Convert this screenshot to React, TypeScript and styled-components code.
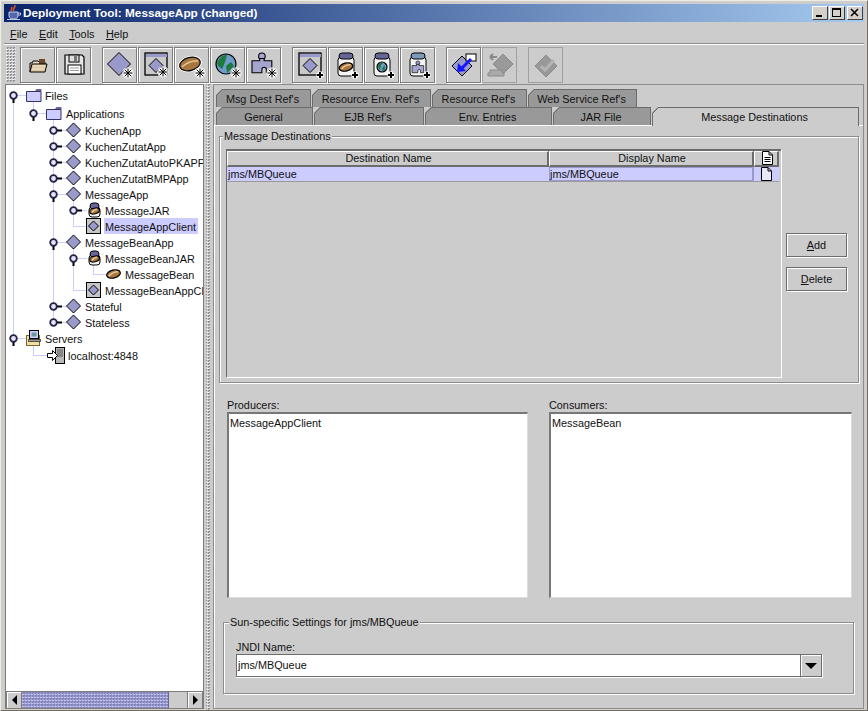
import React from 'react';
import styled, { createGlobalStyle } from 'styled-components';

const GlobalStyle = createGlobalStyle`
  * { box-sizing: border-box; }
  html, body { margin: 0; padding: 0; background: #cccccc; }
  body { font-family: "Liberation Sans", Arial, sans-serif; font-size: 10.85px; color: #111; }
`;

const dots = (a: string, b: string, c: string) =>
  `conic-gradient(${a} 25%, ${b} 0 50%, ${c} 0 75%, ${b} 0) 0 0 / 3px 3px`;

const S = {
  Window: styled.div`
    width: 868px;
    height: 711px;
    display: flex;
    flex-direction: column;
    overflow: hidden;
    background: #cccccc;
    border-style: solid;
    border-color: #eeece6 #6e6c64 #6e6c64 #eeece6;
    border-width: 1px;
    padding: 3px 3px 0 3px;
    box-shadow: inset -1px -1px #d4d0c8, inset 1px 1px #d4d0c8;
  `,
  TitleBar: styled.div`
    flex: none;
    height: 18px;
    display: flex;
    align-items: center;
    padding: 0 1px 0 2px;
    background: linear-gradient(90deg, #0a246a, #a6caf0);
    color: #fff;
    font: bold 11.8px "Liberation Sans", Arial, sans-serif;
  `,
  TitleText: styled.span`
    margin-left: 1px;
    flex: 1;
  `,
  WinButton: styled.div`
    width: 16px;
    height: 14px;
    margin-left: ${(p: { $gap?: number }) => p.$gap ?? 0}px;
    background: #d4d0c8;
    border: 1px solid;
    border-color: #fff #404040 #404040 #fff;
    display: flex;
    align-items: center;
    justify-content: center;
  `,
  MenuBar: styled.div`
    flex: none;
    height: 22px;
    display: flex;
    align-items: center;
    gap: 11.5px;
    padding: 2px 0 0 6px;
    border-bottom: 1px solid #8c8c8c;
  `,
  Mnemonic: styled.span`
    text-decoration: underline;
  `,
  Toolbar: styled.div`
    flex: none;
    height: 40px;
    display: flex;
    align-items: flex-start;
    padding: 2px 0 0 2px;
    border-top: 1px solid #fff;
  `,
  Grip: styled.div`
    width: 10px;
    height: 35px;
    margin-right: 4px;
    background: ${dots('#8f8f8f', '#cccccc', '#f0f0f0')};
  `,
  ToolButton: styled.div<{ $off?: boolean; $gap?: number }>`
    width: 35px;
    height: 36px;
    margin-left: ${p => p.$gap ?? 1}px;
    display: flex;
    align-items: center;
    justify-content: center;
    border: 1px solid ${p => (p.$off ? '#a0a0a0' : '#7c7c7c')};
    box-shadow: ${p => (p.$off ? 'none' : '1px 1px #fff, inset 1px 1px #fff')};
  `,
  Main: styled.div`
    flex: 1;
    min-height: 0;
    display: flex;
  `,
  TreePane: styled.div`
    width: 199px;
    margin: 0 0 1px 1px;
    display: flex;
    flex-direction: column;
    background: #fff;
    border: 1px solid #7c7c7c;
  `,
  Tree: styled.div`
    flex: 1;
    min-height: 0;
    overflow: hidden;
    padding-top: 1px;
  `,
  TreeRow: styled.div<{ $h: number }>`
    height: ${p => p.$h}px;
    display: flex;
    align-items: center;
    white-space: nowrap;
  `,
  Gutter: styled.svg`
    flex: none;
    display: block;
  `,
  TreeLabel: styled.span<{ $selected?: boolean }>`
    height: 16px;
    line-height: 18px;
    padding: 0 2px 0 1px;
    background: ${p => (p.$selected ? '#ccccff' : 'transparent')};
  `,
  HScroll: styled.div`
    flex: none;
    height: 17px;
    display: flex;
    background: #cccccc;
    border-top: 1px solid #7c7c7c;
  `,
  ScrollButton: styled.div`
    width: 16px;
    display: flex;
    align-items: center;
    justify-content: center;
    background: #cccccc;
    box-shadow: inset 1px 1px #fff;
    border: 0 solid #7c7c7c;
    border-width: 0 1px;
  `,
  ScrollThumb: styled.div`
    width: 147px;
    background: ${dots('#8080bb', '#9999cc', '#c4c4ee')};
    border-right: 1px solid #666699;
  `,
  ScrollTrack: styled.div`
    flex: 1;
  `,
  Divider: styled.div`
    width: 9px;
    background: ${dots('#8f8f8f', '#cccccc', '#f0f0f0')};
    background-clip: content-box;
    padding: 0 3px 0 2px;
  `,
  RightPane: styled.div`
    flex: 1;
    margin-bottom: 1px;
    display: flex;
    flex-direction: column;
    border: 1px solid #8c8c8c;
  `,
  TabRow: styled.div<{ $top?: number }>`
    flex: none;
    height: 18px;
    margin-top: ${p => p.$top ?? 0}px;
    display: flex;
    gap: 1px;
    padding-left: 2px;
    position: relative;
    z-index: 1;
  `,
  Tab: styled.div<{ $w: number; $active?: boolean }>`
    width: ${p => p.$w}px;
    height: ${p => (p.$active ? 19 : 18)}px;
    display: flex;
    align-items: center;
    justify-content: center;
    padding: ${p => (p.$active ? '0 2px 1px 0' : '1px 2px 0 0')};
    border: 1px solid #6c6c6c;
    border-bottom: 0;
    clip-path: polygon(6px 0, 100% 0, 100% 100%, 0 100%, 0 6px);
    background: linear-gradient(
      135deg,
      transparent 4px,
      #6c6c6c 4px,
      #6c6c6c 5.2px,
      ${p => (p.$active ? '#cccccc' : '#999999')} 5.2px
    ) border-box;
  `,
  TabBody: styled.div`
    flex: 1;
    min-height: 0;
    display: flex;
    flex-direction: column;
    border-top: 1px solid #fff;
    border-left: 1px solid #fff;
    padding-left: 4px;
  `,
  Group: styled.div<{ $w: number; $h: number; $top: number; $left?: number }>`
    flex: none;
    position: relative;
    width: ${p => p.$w}px;
    height: ${p => p.$h}px;
    margin-top: ${p => p.$top}px;
    margin-left: ${p => p.$left ?? 0}px;
    border: 1px solid #8c8c8c;
    box-shadow: inset 1px 1px #fff, 1px 1px #fff;
  `,
  GroupTitle: styled.span<{ $left: number }>`
    position: absolute;
    top: -7px;
    left: ${p => p.$left}px;
    padding: 0 1px;
    line-height: 13px;
    background: #cccccc;
  `,
  DestBody: styled.div`
    height: 100%;
    display: flex;
    padding: 12px 0 0 6px;
  `,
  TableScroll: styled.div`
    width: 555px;
    height: 228px;
    border: 1px solid #6c6c6c;
    border-width: 2px 0 0 1px;
    box-shadow: 1px 1px #fff;
    margin-right: 5px;
  `,
  TableRow: styled.div<{ $h: number }>`
    display: flex;
    height: ${p => p.$h}px;
  `,
  HeaderCell: styled.div<{ $w: number }>`
    width: ${p => p.$w}px;
    display: flex;
    align-items: center;
    justify-content: center;
    padding: 0 0 1px 2px;
    border: 1px solid;
    border-color: #fff #6c6c6c #6c6c6c #fff;
    border-width: 1px 2px 2px 1px;
  `,
  BodyCell: styled.div<{ $w: number; $focus?: boolean }>`
    width: ${p => p.$w}px;
    display: flex;
    align-items: center;
    padding-left: 1px;
    background: #ccccff;
    border-bottom: 1px solid #9a9a9a;
    box-shadow: ${p => (p.$focus ? 'inset 1px 1px #9999cc, inset -2px -1px #9999cc' : 'none')};
  `,
  IconCell: styled.div`
    width: 25px;
    display: flex;
    align-items: center;
    justify-content: center;
    background: #ccccff;
    border-bottom: 1px solid #9a9a9a;
  `,
  SideButtons: styled.div`
    display: flex;
    flex-direction: column;
    gap: 10px;
    padding-top: 84px;
  `,
  PushButton: styled.div`
    width: 61px;
    height: 24px;
    display: flex;
    align-items: center;
    justify-content: center;
    border: 1px solid #6c6c6c;
    box-shadow: 1px 1px #fff, inset 1px 1px #fff;
  `,
  ListsRow: styled.div`
    flex: none;
    display: flex;
    gap: 21px;
    margin-top: 16px;
    padding-left: 8px;
  `,
  ListColumn: styled.div<{ $w: number }>`
    width: ${p => p.$w}px;
  `,
  FieldLabel: styled.div`
    height: 13px;
    line-height: 13px;
  `,
  ListBox: styled.div`
    height: 186px;
    padding: 3px 1px;
    line-height: 13px;
    background: #fff;
    border: 1px solid #6c6c6c;
    border-width: 2px 1px 1px 2px;
    border-color: #777 #ddd #ddd #777;
  `,
  SunBody: styled.div`
    padding: 18px 0 0 12px;
  `,
  Combo: styled.div`
    display: flex;
    width: 586px;
    height: 23px;
  `,
  ComboInput: styled.div`
    flex: 1;
    padding: 0 1px;
    line-height: 21px;
    background: #fff;
    border: 1px solid #6c6c6c;
    border-right: 0;
    box-shadow: 0 1px #fff;
  `,
  ComboArrow: styled.div`
    width: 22px;
    display: flex;
    align-items: center;
    justify-content: center;
    border: 1px solid #6c6c6c;
    box-shadow: 1px 1px #fff, inset 1px 1px #fff;
  `,
};

// --- drawings ---------------------------------------------------------

const Diamond = ({ cx, cy, r, fill = '#9999cc', stroke = '#000' }: { cx: number; cy: number; r: number; fill?: string; stroke?: string }) => (
  <polygon points={`${cx},${cy - r} ${cx + r},${cy} ${cx},${cy + r} ${cx - r},${cy}`} fill={fill} stroke={stroke} strokeWidth="1" />
);

const Star = ({ x = 22, y = 22 }: { x?: number; y?: number }) => (
  <g strokeLinecap="square">
    <path d={`M${x - 4} ${y}H${x + 4}M${x} ${y - 4}V${y + 4}M${x - 3} ${y - 3}L${x + 3} ${y + 3}M${x + 3} ${y - 3}L${x - 3} ${y + 3}`} stroke="#fff" strokeWidth="3" />
    <path d={`M${x - 4} ${y}H${x + 4}M${x} ${y - 4}V${y + 4}M${x - 3} ${y - 3}L${x + 3} ${y + 3}M${x + 3} ${y - 3}L${x - 3} ${y + 3}`} stroke="#000" strokeWidth="1" />
  </g>
);

const Plus = ({ x = 23, y = 23 }: { x?: number; y?: number }) => (
  <g>
    <path d={`M${x - 3.5} ${y}H${x + 3.5}M${x} ${y - 3.5}V${y + 3.5}`} stroke="#fff" strokeWidth="4" />
    <path d={`M${x - 3} ${y}H${x + 3}M${x} ${y - 3}V${y + 3}`} stroke="#000" strokeWidth="2" />
  </g>
);

const Bean = ({ cx, cy, rx, ry, halo }: { cx: number; cy: number; rx: number; ry: number; halo?: boolean }) => (
  <g transform={`rotate(-14 ${cx} ${cy})`}>
    {halo && <ellipse cx={cx} cy={cy} rx={rx + 1.5} ry={ry + 1.5} fill="#fff" />}
    <ellipse cx={cx} cy={cy} rx={rx} ry={ry} fill="#a8763e" stroke="#000" strokeWidth="1.2" />
    <path d={`M${cx - rx + 2} ${cy + 1}Q${cx} ${cy - ry * 0.6} ${cx + rx - 2} ${cy - 1}`} fill="none" stroke="#e2c79a" strokeWidth="1.5" />
  </g>
);

const Globe = ({ cx, cy, r }: { cx: number; cy: number; r: number }) => (
  <g>
    <circle cx={cx} cy={cy} r={r} fill="#6f9cca" stroke="#000" strokeWidth="1.2" />
    <path d={`M${cx - r + 1} ${cy - 1}Q${cx - r / 2} ${cy - r} ${cx + 1} ${cy - r + 1}L${cx - 1} ${cy - 2}L${cx - 3 * r / 8} ${cy + r / 2}L${cx - r + 2} ${cy + 2}Z`} fill="#1d7a3c" />
    <path d={`M${cx + 1} ${cy + r - 1}L${cx + r - 2} ${cy + 2}L${cx + r / 2} ${cy - 2}L${cx} ${cy + 2}Z`} fill="#1d7a3c" />
  </g>
);

const Puzzle = ({ x, y, s = 1 }: { x: number; y: number; s?: number }) => (
  <g transform={`translate(${x} ${y}) scale(${s})`}>
    <circle cx="9" cy="3" r="3" fill="#a5a5cf" stroke="#000" />
    <path d="M7 5h4v2h7v11h-5v-3a2 2 0 0 0-4 0v3h-9v-11h7z" fill="#a5a5cf" stroke="#000" />
  </g>
);

const WindowBox = ({ x, y, size, r }: { x: number; y: number; size: number; r: number }) => (
  <g>
    <rect x={x} y={y} width={size} height={size} fill="#c9c9c9" stroke="#000" strokeWidth="1.3" />
    <rect x={x + 1} y={y + 1} width={size - 1} height="3" fill="#9999cc" />
    <Diamond cx={x + size / 2} cy={y + size / 2 + 1.5} r={r} />
  </g>
);

const Jar = ({ x, y, w, h, lid = '#666699' }: { x: number; y: number; w: number; h: number; lid?: string }) => (
  <g>
    <rect x={x} y={y + 4} width={w} height={h - 4} rx="3" fill="#f4f4f4" stroke="#000" />
    <rect x={x + 1} y={y} width={w - 2} height="6" rx="3" fill={lid} stroke="#000" />
  </g>
);

const ToolIcon = ({ children }: { children: React.ReactNode }) => (
  <svg width="28" height="28" viewBox="0 0 28 28">{children}</svg>
);

const toolIcons: Record<string, React.ReactNode> = {
  open: (
    <g>
      <path d="M6 21V12h2l1-2h5l1 1h6v3" fill="#e8dcc4" stroke="#000" />
      <path d="M15 8h6v5h-6z" fill="#6b4a32" />
      <path d="M6 21l2-8h15l-2 8z" fill="#e0c8a4" stroke="#000" />
      <path d="M9 15h12M8 18h12" stroke="#f0e4d0" />
    </g>
  ),
  save: (
    <g>
      <path d="M5 4h17l2 2v17h-19z" fill="#e6e6e6" stroke="#000" strokeWidth="1.2" />
      <rect x="9" y="4" width="10" height="7" fill="#ddd" stroke="#000" />
      <rect x="14" y="5" width="3" height="5" fill="#777" />
      <rect x="8" y="14" width="13" height="9" fill="#fff" stroke="#000" />
      <path d="M10 17h9M10 19.500h9" stroke="#999" />
    </g>
  ),
  app: (<g><Diamond cx={13} cy={13} r={11.5} /><Star /></g>),
  client: (<g><WindowBox x={3} y={2} size={22} r={7} /><Star x={21} y={21} /></g>),
  bean: (<g><Bean cx={12} cy={13} rx={10.5} ry={6.5} halo /><Star /></g>),
  globe: (<g><Globe cx={12} cy={13} r={10} /><Star /></g>),
  puzzle: (<g><Puzzle x={2} y={2} s={1.1} /><Star x={22} y={22} /></g>),
  addClient: (<g><WindowBox x={3} y={2} size={22} r={7} /><Plus x={24} y={24} /></g>),
  addBean: (<g><Jar x={6} y={2} w={16} h={23} /><Bean cx={14} cy={16} rx={7} ry={4} /><Plus x={23} y={24} /></g>),
  addGlobe: (<g><Jar x={6} y={2} w={16} h={23} /><Globe cx={14} cy={16} r={5} /><Plus x={23} y={24} /></g>),
  addPuzzle: (<g><Jar x={6} y={2} w={16} h={23} lid="#7d9ab8" /><Puzzle x={8} y={10} s={0.65} /><Plus x={23} y={24} /></g>),
  deploy: (
    <g>
      <Diamond cx={12} cy={15} r={10} />
      <rect x="16" y="3" width="10" height="7" fill="#fff" stroke="#000" />
      <path d="M21 8L11 18" stroke="#1414ff" strokeWidth="3" />
      <path d="M7 21l1-9 8 8z" fill="#1414ff" />
    </g>
  ),
  undeploy: (
    <g>
      <Diamond cx={17} cy={13} r={10} fill="#999" stroke="#8a8a8a" />
      <path d="M4 19h12v3h2v3H2v-3h2z" fill="#aaa" stroke="#8a8a8a" />
      <path d="M4 6h7M4 6l3-3M4 6l3 3" stroke="#8a8a8a" fill="none" strokeWidth="2" />
    </g>
  ),
  verify: (
    <g>
      <Diamond cx={14} cy={15} r={11} fill="#999" stroke="#8a8a8a" />
      <path d="M9 15l4 4 9-10" stroke="#b4b4b4" strokeWidth="3" fill="none" />
    </g>
  ),
};

type ToolDef = { name: string; gap?: number; off?: boolean };

const tools: ToolDef[] = [
  { name: 'open', gap: 0 },
  { name: 'save', gap: 1 },
  { name: 'app', gap: 11 },
  { name: 'client' },
  { name: 'bean' },
  { name: 'globe' },
  { name: 'puzzle' },
  { name: 'addClient', gap: 11 },
  { name: 'addBean' },
  { name: 'addGlobe' },
  { name: 'addPuzzle' },
  { name: 'deploy', gap: 11 },
  { name: 'undeploy', off: true },
  { name: 'verify', gap: 11, off: true },
];

const treeIcons: Record<string, React.ReactNode> = {
  folder: (
    <g>
      <path d="M.5 4.500h14.500v10H.5z" fill="#ccccff" stroke="#333366" />
      <path d="M9 4l1.500-2h5v2" fill="#666699" />
    </g>
  ),
  app: <Diamond cx={7.5} cy={8} r={7} />,
  jar: (<g><Jar x={2} y={1} w={11} h={14} /><Bean cx={7.5} cy={9} rx={5} ry={2.8} /></g>),
  client: (<g><rect x=".5" y=".5" width="14" height="15" fill="#c6c6c6" stroke="#000" /><Diamond cx={7.5} cy={8} r={5} /></g>),
  bean: <Bean cx={7.5} cy={8} rx={7} ry={4} />,
  servers: (
    <g>
      <rect x=".5" y="5.500" width="13" height="10" fill="#f2dfa4" stroke="#776633" />
      <rect x="3.500" y=".5" width="9" height="8" fill="#ccccff" stroke="#000" />
      <rect x="5.500" y="2.500" width="5" height="4" fill="#669999" />
      <path d="M2.500 9.500h12v2h-12z" fill="#999" stroke="#000" strokeWidth=".6" />
    </g>
  ),
  host: (
    <g>
      <rect x="8.500" y=".5" width="9" height="16" fill="#b8b8b8" stroke="#000" />
      <path d="M10 3h6M10 5h6M10 7h6M10 9h6" stroke="#555" />
      <path d="M.5 6.500h5v-3l5 5-5 5v-3h-5z" fill="#fff" stroke="#000" />
    </g>
  ),
};

type RowDef = {
  label: string;
  h?: number;
  text: number;
  full?: number[];
  ends?: number[];
  starts?: number[];
  handle?: 'open' | 'closed';
  from: number;
  iconX: number;
  icon: string;
  selected?: boolean;
};

const rows: RowDef[] = [
  { label: 'Files', h: 18, text: 45, starts: [13, 33], handle: 'open', from: 13, iconX: 26, icon: 'folder' },
  { label: 'Applications', h: 18, text: 66, full: [13], ends: [33], starts: [53], handle: 'open', from: 33, iconX: 46, icon: 'folder' },
  { label: 'KuchenApp', text: 85, full: [13, 53], handle: 'closed', from: 53, iconX: 66, icon: 'app' },
  { label: 'KuchenZutatApp', text: 85, full: [13, 53], handle: 'closed', from: 53, iconX: 66, icon: 'app' },
  { label: 'KuchenZutatAutoPKAPP', text: 85, full: [13, 53], handle: 'closed', from: 53, iconX: 66, icon: 'app' },
  { label: 'KuchenZutatBMPApp', text: 85, full: [13, 53], handle: 'closed', from: 53, iconX: 66, icon: 'app' },
  { label: 'MessageApp', text: 85, full: [13, 53], starts: [73], handle: 'open', from: 53, iconX: 66, icon: 'app' },
  { label: 'MessageJAR', text: 105, full: [13, 53, 73], handle: 'closed', from: 73, iconX: 87, icon: 'jar' },
  { label: 'MessageAppClient', text: 105, full: [13, 53], ends: [73], from: 73, iconX: 86, icon: 'client', selected: true },
  { label: 'MessageBeanApp', text: 85, full: [13, 53], starts: [73], handle: 'open', from: 53, iconX: 66, icon: 'app' },
  { label: 'MessageBeanJAR', text: 105, full: [13, 53, 73], starts: [93], handle: 'open', from: 73, iconX: 87, icon: 'jar' },
  { label: 'MessageBean', text: 125, full: [13, 53, 73], ends: [93], from: 93, iconX: 106, icon: 'bean' },
  { label: 'MessageBeanAppClient', text: 105, full: [13, 53], ends: [73], from: 73, iconX: 86, icon: 'client' },
  { label: 'Stateful', text: 85, full: [13, 53], handle: 'closed', from: 53, iconX: 66, icon: 'app' },
  { label: 'Stateless', text: 85, full: [13], ends: [53], handle: 'closed', from: 53, iconX: 66, icon: 'app' },
  { label: 'Servers', text: 45, ends: [13], starts: [33], handle: 'open', from: 13, iconX: 26, icon: 'servers' },
  { label: 'localhost:4848', h: 18, text: 68, ends: [33], from: 33, iconX: 47, icon: 'host' },
];

const GUIDE = '#ccccff';

function TreeItem({ row }: { row: RowDef }) {
  const h = row.h ?? 16;
  const mid = h / 2;
  const hy = Math.floor(mid);
  return (
    <S.TreeRow $h={h}>
      <S.Gutter width={row.text - 7} height={h} viewBox={`6 0 ${row.text - 7} ${h}`}>
        {(row.full ?? []).map(x => <path key={x} d={`M${x + 0.5} 0V${h}`} stroke={GUIDE} />)}
        {(row.ends ?? []).map(x => <path key={x} d={`M${x + 0.5} 0V${mid}`} stroke={GUIDE} />)}
        {(row.starts ?? []).map(x => <path key={x} d={`M${x + 0.5} ${mid}V${h}`} stroke={GUIDE} />)}
        <path d={`M${row.from} ${hy + 0.5}H${row.iconX}`} stroke={GUIDE} />
        {row.handle === 'open' && <rect x={row.from - 0.5} y={hy} width="2" height="8" fill="#000" />}
        {row.handle === 'closed' && <rect x={row.from} y={hy - 0.5} width="9" height="2" fill="#000" />}
        {row.handle && <circle cx={row.from + 0.5} cy={hy + 0.5} r="3.3" fill="#e4e4ff" stroke="#222244" strokeWidth="1.8" />}
        <g transform={`translate(${row.iconX} ${hy - 8})`}>{treeIcons[row.icon]}</g>
      </S.Gutter>
      <S.TreeLabel $selected={row.selected}>{row.label}</S.TreeLabel>
    </S.TreeRow>
  );
}

const Arrow = ({ dir }: { dir: 'left' | 'right' | 'down' }) => {
  const pts = { left: '6,0 6,10 1,5', right: '1,0 1,10 6,5', down: '0,2 12,2 6,8' }[dir];
  return (
    <svg width={dir === 'down' ? 12 : 7} height="10">
      <polygon points={pts} fill="#000" />
    </svg>
  );
};

const backTabs: [string, number][] = [
  ["Msg Dest Ref's", 95],
  ["Resource Env. Ref's", 119],
  ["Resource Ref's", 95],
  ["Web Service Ref's", 109],
];

const frontTabs: [string, number][] = [
  ['General', 97],
  ["EJB Ref's", 110],
  ['Env. Entries', 127],
  ['JAR File', 98],
  ['Message Destinations', 207],
];

const DocIcon = ({ lines }: { lines?: boolean }) => (
  <svg width="11" height="14" viewBox="0 0 11 14">
    <path d="M.5.500h6.500l3.500 3.500v9.500H.5z" fill={lines ? '#fff' : '#e8e8f8'} stroke="#000" />
    <path d="M7 .5V4h3.500" fill="none" stroke="#000" />
    {lines && <path d="M2.500 6.500h6M2.500 8.500h6M2.500 10.500h6" stroke="#000" />}
  </svg>
);

export default function App() {
  return (
    <>
      <GlobalStyle />
      <S.Window>
        <S.TitleBar>
          <svg width="16" height="16" viewBox="0 0 16 16">
            <path d="M8.500 0c2 2-2.500 3-.5 6M5.500 2c1 2-1 2 0 4" stroke="#e0562a" strokeWidth="1.500" fill="none" />
            <path d="M3 7h9v4c0 2-2 3-4.500 3S3 13 3 11z" fill="#5566aa" stroke="#c8d0f0" />
            <path d="M12 8h2.500v2H12M1 14.500h13" stroke="#c0c8e8" fill="none" />
          </svg>
          <S.TitleText>Deployment Tool: MessageApp (changed)</S.TitleText>
          <S.WinButton>
            <svg width="10" height="10"><rect x="1" y="7" width="6" height="2" fill="#000" /></svg>
          </S.WinButton>
          <S.WinButton $gap={1}>
            <svg width="10" height="10"><rect x=".5" y=".5" width="8" height="8" fill="none" stroke="#000" /><rect x="0" y="0" width="9" height="2" fill="#000" /></svg>
          </S.WinButton>
          <S.WinButton $gap={2}>
            <svg width="10" height="10"><path d="M1 1l7 7M8 1l-7 7" stroke="#000" strokeWidth="1.500" /></svg>
          </S.WinButton>
        </S.TitleBar>

        <S.MenuBar>
          <span><S.Mnemonic>F</S.Mnemonic>ile</span>
          <span><S.Mnemonic>E</S.Mnemonic>dit</span>
          <span><S.Mnemonic>T</S.Mnemonic>ools</span>
          <span><S.Mnemonic>H</S.Mnemonic>elp</span>
        </S.MenuBar>

        <S.Toolbar>
          <S.Grip />
          {tools.map(t => (
            <S.ToolButton key={t.name} $gap={t.gap} $off={t.off}>
              <ToolIcon>{toolIcons[t.name]}</ToolIcon>
            </S.ToolButton>
          ))}
        </S.Toolbar>

        <S.Main>
          <S.TreePane>
            <S.Tree>
              {rows.map(r => <TreeItem key={r.label} row={r} />)}
            </S.Tree>
            <S.HScroll>
              <S.ScrollButton><Arrow dir="left" /></S.ScrollButton>
              <S.ScrollThumb />
              <S.ScrollTrack />
              <S.ScrollButton><Arrow dir="right" /></S.ScrollButton>
            </S.HScroll>
          </S.TreePane>
          <S.Divider />
          <S.RightPane>
            <S.TabRow $top={4}>
              {backTabs.map(([t, w]) => <S.Tab key={t} $w={w}>{t}</S.Tab>)}
            </S.TabRow>
            <S.TabRow>
              {frontTabs.map(([t, w]) => (
                <S.Tab key={t} $w={w} $active={t === 'Message Destinations'}>{t}</S.Tab>
              ))}
            </S.TabRow>
            <S.TabBody>
              <S.Group $w={640} $h={247} $top={10}>
                <S.GroupTitle $left={3}>Message Destinations</S.GroupTitle>
                <S.DestBody>
                  <S.TableScroll>
                    <S.TableRow $h={16}>
                      <S.HeaderCell $w={322}>Destination Name</S.HeaderCell>
                      <S.HeaderCell $w={205}>Display Name</S.HeaderCell>
                      <S.HeaderCell $w={25}><DocIcon lines /></S.HeaderCell>
                    </S.TableRow>
                    <S.TableRow $h={15}>
                      <S.BodyCell $w={322}>jms/MBQueue</S.BodyCell>
                      <S.BodyCell $w={205} $focus>jms/MBQueue</S.BodyCell>
                      <S.IconCell><DocIcon /></S.IconCell>
                    </S.TableRow>
                  </S.TableScroll>
                  <S.SideButtons>
                    <S.PushButton><span><S.Mnemonic>A</S.Mnemonic>dd</span></S.PushButton>
                    <S.PushButton><span><S.Mnemonic>D</S.Mnemonic>elete</span></S.PushButton>
                  </S.SideButtons>
                </S.DestBody>
              </S.Group>

              <S.ListsRow>
                <S.ListColumn $w={301}>
                  <S.FieldLabel>Producers:</S.FieldLabel>
                  <S.ListBox>MessageAppClient</S.ListBox>
                </S.ListColumn>
                <S.ListColumn $w={303}>
                  <S.FieldLabel>Consumers:</S.FieldLabel>
                  <S.ListBox>MessageBean</S.ListBox>
                </S.ListColumn>
              </S.ListsRow>

              <S.Group $w={631} $h={72} $top={24} $left={4}>
                <S.GroupTitle $left={5}>Sun-specific Settings for jms/MBQueue</S.GroupTitle>
                <S.SunBody>
                  <S.FieldLabel>JNDI Name:</S.FieldLabel>
                  <S.Combo>
                    <S.ComboInput>jms/MBQueue</S.ComboInput>
                    <S.ComboArrow><Arrow dir="down" /></S.ComboArrow>
                  </S.Combo>
                </S.SunBody>
              </S.Group>
            </S.TabBody>
          </S.RightPane>
        </S.Main>
      </S.Window>
    </>
  );
}
